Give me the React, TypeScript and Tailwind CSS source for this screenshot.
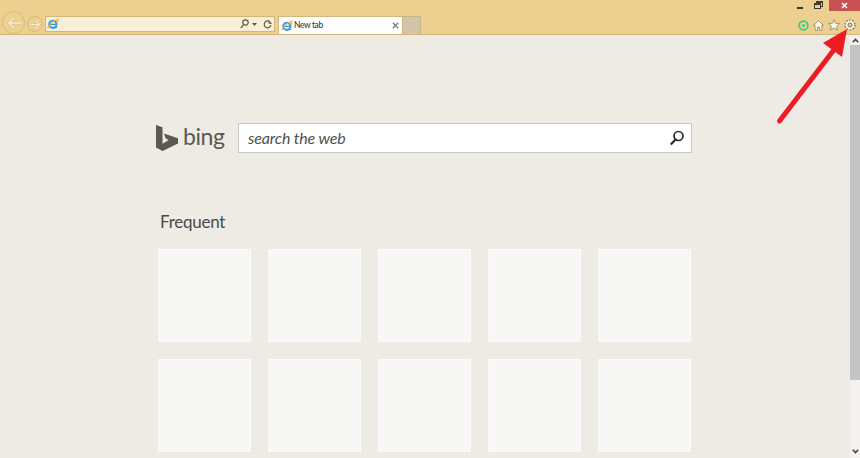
const uiFont = { fontFamily: 'Lato, "Noto Sans", sans-serif' };

function IeLogo() {
  return (
    <svg width="12" height="12" viewBox="0 0 13 13" className="shrink-0">
      <circle cx="6.3" cy="6.8" r="5" fill="#3b9ddd" />
      <circle cx="6.3" cy="6.8" r="2.8" fill="#f7f7f4" />
      <rect x="3.2" y="6.2" width="6.4" height="1.3" fill="#2a8fd6" />
      <path d="M7 9.4h4.2L11 10.6 7 11.6z" fill="#3b9ddd" />
      <path d="M1 11.5C.4 9.5 5 3.2 11.8 1.2c.6 1.4-.3 3-1 3.8" fill="none" stroke="#f2b632" strokeWidth="1.2" />
    </svg>
  );
}

function BackButton() {
  return (
    <div className="flex h-[23px] w-[23px] items-center justify-center rounded-full border border-[#d6b87c] bg-[#edd18f]">
      <svg width="16" height="14" viewBox="0 0 16 14" fill="none">
        <path d="M15 7H3.500M8 2 3 7l5 5" stroke="#dcc08a" strokeWidth="3" />
        <path d="M15 7H3.500M8 2 3 7l5 5" stroke="#f8eed6" strokeWidth="1.600" />
      </svg>
    </div>
  );
}

function ForwardButton() {
  return (
    <div className="mb-[2px] flex h-[16px] w-[16px] items-center justify-center rounded-full border border-[#d6b87c] bg-[#edd18f]">
      <svg width="11" height="9" viewBox="0 0 11 9" fill="none">
        <path d="M.5 4.500H9M6 1.300 9.300 4.500 6 7.700" stroke="#dcc08a" strokeWidth="2.200" />
        <path d="M.5 4.500H9M6 1.300 9.300 4.500 6 7.700" stroke="#f8eed6" strokeWidth="1.100" />
      </svg>
    </div>
  );
}

function AddressBar() {
  return (
    <div className="ml-[2px] mb-[2px] flex h-[16px] w-[230px] items-center border border-[#d2b67c] bg-[#f9efd9] pl-[1px] pr-[2px]">
      <IeLogo />
      <div className="ml-auto flex items-center gap-[3px]">
        <svg width="9" height="10" viewBox="0 0 9 10" fill="none" stroke="#5d574a" strokeWidth="1.200">
          <circle cx="5.500" cy="3.500" r="2.700" />
          <path d="M3.500 5.700.8 9" />
        </svg>
        <svg width="5" height="3" viewBox="0 0 5 3" fill="#5d574a">
          <path d="M0 0h5L2.500 3z" />
        </svg>
        <svg width="9" height="9" viewBox="0 0 9 9" fill="none" stroke="#5d574a" strokeWidth="1.200" className="ml-[3px]">
          <path d="M7.500 2.500A3.400 3.400 0 1 0 8 5" />
          <path d="M6 .3v3h2.800" strokeWidth="1" />
        </svg>
      </div>
    </div>
  );
}

function Tab() {
  return (
    <div className="ml-[3px] flex h-[18px] w-[125px] items-center border border-b-0 border-[#d2b67c] bg-white pl-[2px] pr-[3px]">
      <IeLogo />
      <span className="ml-[1px] text-[8.5px] font-medium leading-none tracking-[-0.4px] text-[#3a3a3a]">New tab</span>
      <svg width="7" height="7" viewBox="0 0 7 7" stroke="#7c7c7c" strokeWidth="1.300" className="ml-auto">
        <path d="M.8 .8l5.400 5.400M6.200 .8.800 6.200" />
      </svg>
    </div>
  );
}

function ToolIcons() {
  return (
    <div className="ml-auto mb-[3px] flex items-center">
      <svg width="11" height="11" viewBox="0 0 11 11" fill="none">
        <circle cx="5.500" cy="5.500" r="4.300" stroke="#3ecb8a" strokeWidth="1.800" />
        <circle cx="5.500" cy="5.500" r="1.500" fill="#3ecb8a" />
      </svg>
      <svg width="11" height="11" viewBox="0 0 11 11" fill="#fbf5e6" stroke="#6f6a5c" strokeWidth=".6" className="ml-[4px]">
        <path d="M5.500 .6.500 5.400h1.600v5h2.400V7.200h2v3.200h2.400v-5h1.600z" />
      </svg>
      <svg width="12" height="12" viewBox="0 0 12 12" fill="#fbf5e6" stroke="#6f6a5c" strokeWidth=".6" className="ml-[4px]">
        <path d="M6 .6l1.600 3.700 4 .3-3 2.600.9 3.900L6 9.100 2.500 11.100l.9-3.900-3-2.600 4-.3z" />
      </svg>
      <svg width="12" height="12" viewBox="0 0 12 12" fill="none" className="ml-[4px] mr-[4px]">
        <circle cx="6" cy="6" r="3.700" stroke="#fbf5e6" strokeWidth="2.400" />
        <circle cx="6" cy="6" r="5" stroke="#6f6a5c" strokeWidth="1.200" strokeDasharray="1.700 1.440" />
        <circle cx="6" cy="6" r="2" stroke="#6f6a5c" strokeWidth=".8" />
      </svg>
    </div>
  );
}

function WindowControls() {
  return (
    <div className="flex h-[11px] items-start justify-end">
      <div className="mr-[11px] mt-[7px] h-[2px] w-[6px] bg-[#3d3a33]" />
      <div className="relative mr-[6px] mt-[1px] h-[8px] w-[9px]">
        <div className="absolute right-0 top-0 h-[6px] w-[7px] border border-t-2 border-[#3d3a33]" />
        <div className="absolute bottom-0 left-0 h-[6px] w-[7px] border border-t-2 border-[#3d3a33] bg-[#edd08f]" />
      </div>
      <div className="flex h-[11px] w-[31px] items-center justify-center bg-[#c75050]">
        <svg width="7" height="7" viewBox="0 0 7 7" stroke="#fff" strokeWidth="1.600">
          <path d="M1 1l5 5M6 1 1 6" />
        </svg>
      </div>
    </div>
  );
}

function Scrollbar() {
  return (
    <div className="flex w-[10px] shrink-0 flex-col bg-[#f3f2ef]">
      <div className="flex h-[10px] items-center justify-center">
        <svg width="7" height="5" viewBox="0 0 7 5" fill="none" stroke="#404040" strokeWidth="1.500">
          <path d="M.8 4.200 3.500 1.400l2.700 2.800" />
        </svg>
      </div>
      <div className="h-[335px] bg-[#c4c4c4]" />
      <div className="flex-1" />
      <div className="flex h-[14px] items-center justify-center">
        <svg width="7" height="5" viewBox="0 0 7 5" fill="none" stroke="#404040" strokeWidth="1.500">
          <path d="M.8 .8 3.500 3.600 6.200 .8" />
        </svg>
      </div>
    </div>
  );
}

function BingMark() {
  return (
    <svg width="22" height="26" viewBox="0 0 22 26" fill="#5b5853">
      <path d="M0 0l6.500 2.300v16.400l6.300-3.700-3-1.400-2-5L22 13.300v5.200L6.500 26 0 22.400z" />
    </svg>
  );
}

function Tile() {
  return <div className="h-[93px] w-[93px] border border-[#fafaf9] bg-[#f7f7f6]" />;
}

export default function App() {
  return (
    <div className="relative flex h-[458px] w-[860px] flex-col overflow-hidden bg-[#eeebe4]" style={uiFont}>
      {/* Browser chrome */}
      <header className="h-[35px] shrink-0 border-b border-[#d2b67c] bg-[#edd08f]">
        <WindowControls />
        <div className="flex h-[23px] items-end pl-[2px]">
          <BackButton />
          <div className="ml-[2px]">
            <ForwardButton />
          </div>
          <AddressBar />
          <Tab />
          <div className="h-[18px] w-[18px] border border-b-0 border-l-0 border-[#c9b58a] bg-[#d2c5a8]" />
          <ToolIcons />
        </div>
      </header>

      <div className="flex min-h-0 flex-1">
        <main className="flex-1 pl-[156px] pt-[88px]">
          {/* Search row */}
          <div className="flex h-[29px] items-center">
            <BingMark />
            <span className="ml-[5px] w-[55px] pb-[2px] text-[23px] leading-none tracking-[-0.4px] text-[#5b5853]">bing</span>
            <div className="flex h-[30px] w-[454px] items-center border border-[#c9c7c1] bg-white pl-[9px] pr-[5px]">
              <span className="text-[16px] italic leading-none tracking-[-0.15px] text-[#505050]">search the web</span>
              <svg width="16" height="16" viewBox="0 0 16 16" fill="none" stroke="#2b2b2b" className="ml-auto mr-[1px]">
                <circle cx="9.500" cy="6" r="4.500" strokeWidth="1.700" />
                <path d="M6.500 9.500 1.800 14.500" strokeWidth="2.200" />
              </svg>
            </div>
          </div>

          {/* Frequent tiles */}
          <h2 className="ml-[4px] mt-[58px] text-[17px] leading-[24px] tracking-[-0.25px] text-[#4a4a4a]">Frequent</h2>
          <div className="ml-[2px] mt-[15px] grid grid-cols-[repeat(5,93px)] gap-x-[17px] gap-y-[17px]">
            {Array.from({ length: 10 }).map((_, i) => (
              <Tile key={i} />
            ))}
          </div>
        </main>
        <Scrollbar />
      </div>

      {/* Red annotation arrow */}
      <svg width="90" height="105" viewBox="0 0 90 105" className="absolute left-[770px] top-[25px]">
        <path d="M9.500 96 63 26" stroke="#ed1c24" strokeWidth="5" strokeLinecap="round" />
        <path d="M77 4 53 18 72 32z" fill="#ed1c24" />
      </svg>
    </div>
  );
}
